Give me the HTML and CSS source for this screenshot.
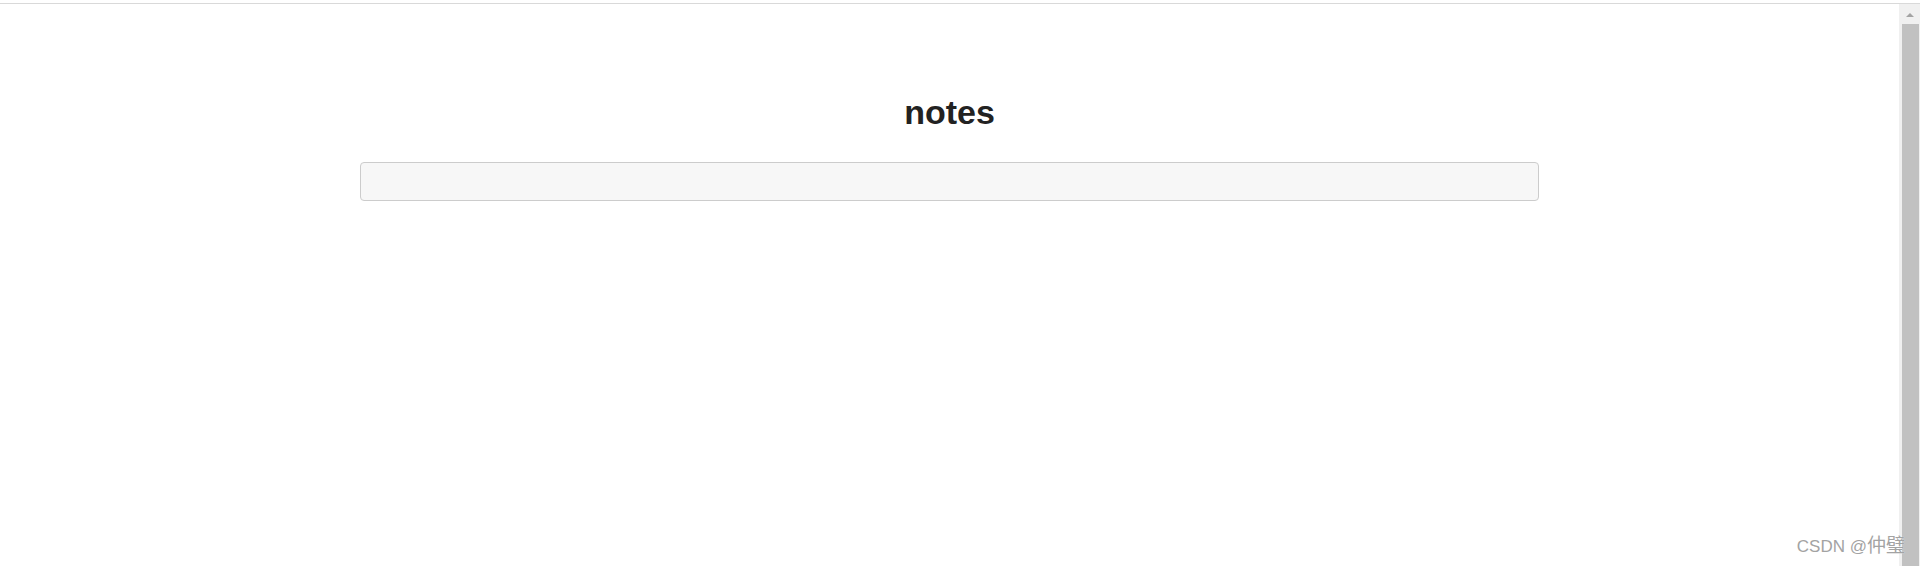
FILE: index.html
```html
<!DOCTYPE html>
<html lang="en">
<head>
<meta charset="utf-8">
<title>notes</title>
<link rel="stylesheet" href="styles.css">
</head>
<body>
<div class="topline"></div>
<div class="frame">
  <main class="main">
    <h1 class="title">notes</h1>
    <div class="notebox"></div>
  </main>
  <div class="scrollbar">
    <div class="arrow"></div>
    <div class="thumb"></div>
  </div>
</div>
<div class="watermark">CSDN @<span class="cjk">仲璧</span></div>
</body>
</html>
```

FILE: styles.css
```css
html, body {
  margin: 0;
  padding: 0;
  height: 100%;
  overflow: hidden;
  background: #ffffff;
  font-family: "Liberation Sans", Arial, sans-serif;
}
.topline {
  height: 3px;
  border-bottom: 1px solid #d9d9d9;
}
.frame {
  display: flex;
  height: 562px;
}
.main {
  flex: 1;
  display: flex;
  flex-direction: column;
  align-items: center;
  padding-top: 88px;
}
.title {
  margin: 0;
  font-size: 34px;
  line-height: 40px;
  font-weight: bold;
  color: #222222;
}
.notebox {
  margin-top: 30px;
  width: 62%;
  height: 37px;
  border: 1px solid #cccccc;
  border-radius: 4px;
  background: #f7f7f7;
}
.scrollbar {
  width: 21px;
  background: #f0f0f0;
  display: flex;
  flex-direction: column;
  align-items: center;
}
.arrow {
  margin-top: 9px;
  width: 0;
  height: 0;
  border-left: 4px solid transparent;
  border-right: 4px solid transparent;
  border-bottom: 4px solid #a3a3a3;
}
.thumb {
  margin-top: 7px;
  width: 17px;
  flex: 1;
  background: #c1c1c1;
  margin-left: 1px;
}
.watermark {
  position: absolute;
  right: 15px;
  bottom: 9px;
  font-size: 17px;
  color: #a3a3a3;
  font-family: "Liberation Sans", "Noto Sans CJK SC", sans-serif;
  line-height: 20px;
  text-shadow: 0 0 1px #ffffff;
}
.cjk {
  font-family: "Noto Sans CJK SC", sans-serif;
  font-size: 19px;
  line-height: 20px;
}
```
